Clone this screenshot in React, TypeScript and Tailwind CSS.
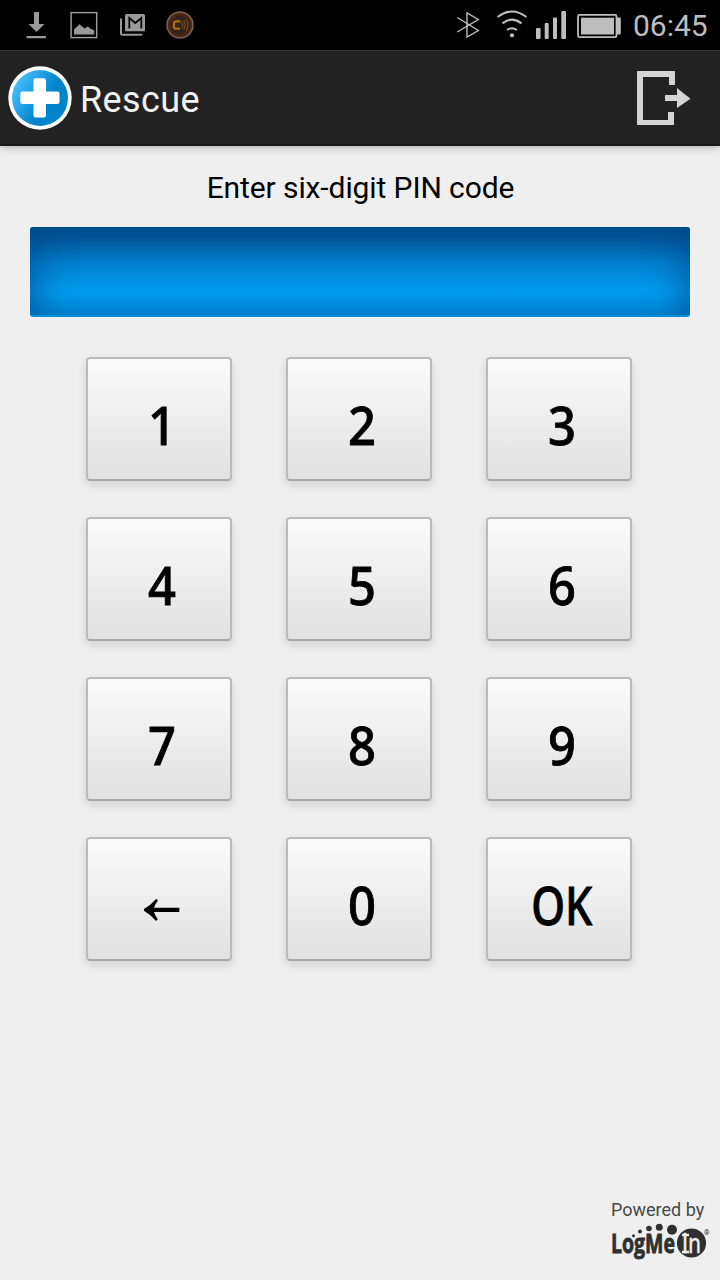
import React from 'react';
import { clsx } from 'clsx';

const KEYS = ['1', '2', '3', '4', '5', '6', '7', '8', '9', 'back', '0', 'OK'];

const NotificationIcons: React.FC = () => (
  <svg width="220" height="50" viewBox="0 0 220 50" className="block">
    {/* Download */}
    <path d="M34 12h5v12h5.500l-8 8-8-8h5.500zM26.500 36h19.500v2.200h-19.500z" fill="#999" />
    {/* Picture */}
    <rect x="71.100" y="12.600" width="25.600" height="25" fill="none" stroke="#999" strokeWidth="1.500" />
    <path d="M74 34.500v-5l5.500-5.300 5 4.200 3.200-1.800 3 2.200 3.500 1.600v4.100z" fill="#999" />
    {/* Mail */}
    <path d="M121 18.500v14.800q0 1.500 1.500 1.500h19.800" fill="none" stroke="#999" strokeWidth="2" />
    <rect x="125" y="14" width="20" height="17.200" rx="1.500" fill="#999" />
    <path d="M129.300 28.500V18l6 5 6-5v10.500" fill="none" stroke="#080808" strokeWidth="1.800" />
    {/* Call recorder */}
    <circle cx="180" cy="25" r="13" fill="url(#recorder)" stroke="#75625a" strokeWidth="1.500" />
    <path d="M180.300 21.300h-4.600l-1.800 1.400v4.600l1 1.300h5" fill="none" stroke="#b86a10" strokeWidth="2.200" />
    <path d="M181.700 21.500q2 3.500 0 7M183.800 20.200q3 4.800 0 9.600M186 19q3.700 6 0 12" fill="none" stroke="#87500f" strokeWidth="1" />
    <defs>
      <radialGradient id="recorder">
        <stop offset="0" stopColor="#2c2a24" />
        <stop offset=".6" stopColor="#2d211b" />
        <stop offset="1" stopColor="#662912" />
      </radialGradient>
    </defs>
  </svg>
);

const SystemIcons: React.FC = () => (
  <svg width="176" height="50" viewBox="450 0 176 50" className="block">
    {/* Bluetooth */}
    <path d="M457.300 17.500l21 13-11.300 6.500V13l11.300 6.500-21 12.500" fill="none" stroke="#bebebe" strokeWidth="1.400" />
    {/* Wi-Fi */}
    <g fill="none" stroke="#bebebe" strokeWidth="2">
      <path d="M497.500 17q14.500-11 29 0" />
      <path d="M502.500 23.400q9.500-7.500 19 0" />
      <path d="M507 30q5-3.500 10 0" />
    </g>
    <circle cx="512" cy="35.300" r="2.100" fill="#bebebe" />
    {/* Signal */}
    <g fill="#bebebe">
      <rect x="536" y="28" width="4.600" height="11" rx="1" />
      <rect x="544.700" y="23" width="4" height="16" rx="1" />
      <rect x="553" y="17.500" width="4" height="21.500" rx="1" />
      <rect x="561.300" y="11" width="4.700" height="28" rx="1" />
    </g>
    {/* Battery */}
    <rect x="578" y="14.800" width="38.500" height="22.400" rx="1.500" fill="none" stroke="#bebebe" strokeWidth="1.800" />
    <rect x="581" y="17.700" width="33" height="16.800" fill="#bebebe" />
    <rect x="616.500" y="17.500" width="4.300" height="17" rx="1" fill="#bebebe" />
  </svg>
);

const RescueLogo: React.FC = () => (
  <svg width="64" height="64" viewBox="0 0 64 64" className="block">
    <defs>
      <linearGradient id="rescue" x1="0" y1="0.200" x2="1" y2="0.800">
        <stop offset="0.100" stopColor="#42b8fa" />
        <stop offset="0.600" stopColor="#0085cb" />
        <stop offset="1" stopColor="#0085cb" />
      </linearGradient>
    </defs>
    <circle cx="32" cy="32" r="31.700" fill="#fff" />
    <circle cx="32" cy="32" r="28" fill="url(#rescue)" />
    <path
      d="M27.500 12.300h8.500q2 0 2 2V25.500h11.500q2 0 2 2v8.500q0 2-2 2H38v11.500q0 2-2 2h-8.500q-2 0-2-2V38H14.300q-2 0-2-2v-8.500q0-2 2-2H25.500V14.300q0-2 2-2z"
      fill="#fff"
    />
  </svg>
);

const ExitIcon: React.FC = () => (
  <svg width="56" height="56" viewBox="0 0 56 56" className="block">
    <path d="M1 1h38v14h-6V7H7v43h25v-8h6v13H1z" fill="#d4d4d4" />
    <path d="M29 25h12v-7l13.500 10.800L41 38v-7H29z" fill="#d4d4d4" />
  </svg>
);

const BackArrow: React.FC = () => (
  <svg width="36" height="24" viewBox="0 0 36 24" className="mt-[10px] block">
    <path d="M35.300 9.700v4.400H10q.8 3.300 3.600 6.800.2 1.700-1.800 1.900Q6.500 16.500.3 13q-.7-1.100 0-2.200Q6.500 7.400 11.800 1.200q2-.1 1.800 1.700Q10.800 6.400 10 9.700z" fill="#000" />
  </svg>
);

const LogMeInLogo: React.FC = () => (
  <svg width="100" height="38" viewBox="610 1222 100 38" className="block">
    <g fill="#303030">
      <circle cx="633.500" cy="1235.700" r="1.500" />
      <circle cx="640" cy="1231.500" r="2" />
      <circle cx="649" cy="1228.500" r="2.800" />
      <circle cx="659.300" cy="1227.200" r="3.500" />
      <circle cx="672" cy="1229.700" r="5" />
      <circle cx="691.500" cy="1243" r="14.600" />
      <text
        transform="translate(611 1253) scale(0.75 1)"
        fontSize="26"
        fontWeight="700"
        fontFamily="'Open Sans', 'Noto Sans', sans-serif"
        stroke="#303030"
        strokeWidth="0.800"
      >
        LogMe
      </text>
      <text
        transform="translate(682 1253) scale(0.79 1)"
        fontSize="26"
        fontFamily="'DejaVu Sans', sans-serif"
        fill="#efefef"
        stroke="#efefef"
        strokeWidth="0.500"
      >
        In
      </text>
      <text x="704" y="1235" fontSize="7" fontWeight="700" fontFamily="Roboto, sans-serif">®</text>
      <path d="M682 1233.800h7v2.400h-7zM682 1250.800h7v2.400h-7z" fill="#efefef" />
    </g>
  </svg>
);

const Key: React.FC<{ label: string }> = ({ label }) => (
  <button
    type="button"
    aria-label={label === 'back' ? 'Backspace' : label}
    className="flex h-[124px] w-[146px] items-center justify-center rounded-[4px] border-2 border-[#bababa] border-b-[#aaa] bg-linear-to-b from-[#fbfbfb] to-[#e1e1e1] pt-[12px] pl-[5px] shadow-[0_4px_8px_rgba(0,0,0,0.13)]"
  >
    {label === 'back' ? (
      <BackArrow />
    ) : (
      <span
        className={clsx(
          "font-['Noto_Sans',sans-serif] text-[52px] leading-none font-medium text-black [-webkit-text-stroke:0.8px_black]",
          label === 'OK' ? 'scale-x-[0.83]' : 'scale-x-[0.94]'
        )}
      >
        {label}
      </span>
    )}
  </button>
);

export default function App() {
  return (
    <div className="flex h-[1280px] w-[720px] flex-col overflow-hidden bg-[#efefef] font-[Roboto,sans-serif]">
      {/* Status bar */}
      <div className="flex h-[50px] shrink-0 items-center bg-black">
        <NotificationIcons />
        <div className="ml-auto flex items-center">
          <SystemIcons />
          <span className="w-[94px] pt-px pl-[7px] text-[30px] leading-[49px] whitespace-nowrap text-[#bebebe]">06:45</span>
        </div>
      </div>

      {/* Action bar */}
      <header className="z-10 flex h-24 shrink-0 items-center border-t border-b-2 border-t-[#363636] border-b-[#191717] bg-[#222] pr-[28px] pl-2 shadow-[0_1px_8px_rgba(0,0,0,0.3)]">
        <RescueLogo />
        <h1 className="pl-2 pt-1 text-[36px] leading-none tracking-[0.4px] text-[#f3f3f3]">Rescue</h1>
        <div className="ml-auto">
          <ExitIcon />
        </div>
      </header>

      <main className="flex flex-1 flex-col px-[30px]">
        <p className="h-[81px] pt-[22px] pl-px text-center text-[30px] leading-[40px] tracking-[-0.1px] whitespace-nowrap text-black">
          Enter six-digit PIN code
        </p>
        <div className="h-[90px] rounded-[3px] border-b-2 border-[#0090de] bg-linear-[180deg,#004d8c_0%,#005ca0_18%,#0080cf_42%,#009aec_70%,#0099eb_76%,#0084d0_100%] shadow-[inset_36px_0_36px_-30px_rgba(0,75,140,0.75),inset_-36px_0_36px_-30px_rgba(0,75,140,0.75)]" />
        <div className="mt-10 ml-[56px] grid w-[546px] grid-cols-3 gap-x-[54px] gap-y-9">
          {KEYS.map((label) => (
            <Key key={label} label={label} />
          ))}
        </div>
      </main>

      <footer className="flex h-[84px] shrink-0 flex-col items-end pr-[10px]">
        <div className="w-[100px]">
          <p className="h-[26px] pl-px text-[18px] leading-[27px] whitespace-nowrap text-[#484848]">Powered by</p>
          <LogMeInLogo />
        </div>
      </footer>
    </div>
  );
}
